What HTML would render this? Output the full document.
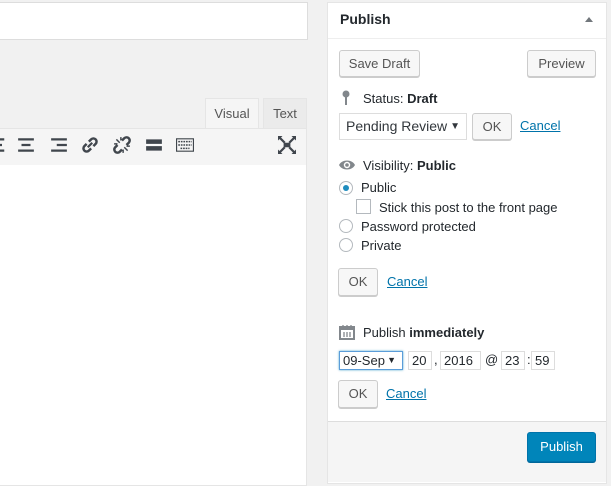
<!DOCTYPE html>
<html><head><style>
body{margin:0;width:611px;height:476px;background:#f1f1f1;font-family:"Liberation Sans",sans-serif;font-size:13px;color:#23282d;position:relative;overflow:hidden}
.a{position:absolute}
.btn{position:absolute;background:#f7f7f7;border:1px solid #ccc;border-radius:3px;box-shadow:0 1px 0 #ccc;color:#555;font-size:13px;text-align:center;box-sizing:border-box}
.lnk{position:absolute;color:#0073aa;text-decoration:underline}
.radio{position:absolute;width:14px;height:14px;border:1px solid #b4b9be;border-radius:50%;background:#fff;box-sizing:border-box}
.inp{position:absolute;border:1px solid #ddd;background:#fff;box-sizing:border-box;height:19px;font-size:13px;padding:0 3px;line-height:17px}
.tb{position:absolute;top:136px;width:18px;height:18px;fill:#40464d}
</style></head><body>
<div class="a" style="left:-2px;top:2px;width:308px;height:36px;background:#fff;border:1px solid #ddd"></div>
<div class="a" style="left:205px;top:98px;width:52px;height:31px;background:#f5f5f5;border:1px solid #e5e5e5;border-bottom:none;text-align:center;line-height:29px;color:#555">Visual</div>
<div class="a" style="left:263px;top:98px;width:42px;height:29px;background:#ebebeb;border:1px solid #e5e5e5;border-bottom:none;text-align:center;line-height:29px;color:#555">Text</div>
<div class="a" style="left:-2px;top:128px;width:307px;height:36px;background:#f5f5f5;border:1px solid #e5e5e5"></div>
<div class="a" style="left:-2px;top:165px;width:307px;height:320px;background:#fff;border:1px solid #e5e5e5;border-top:none"></div>
<svg class="tb" style="left:-7px" viewBox="0 0 16 16"><rect x="0" y="2" width="10" height="2"/><rect x="0" y="7" width="8" height="2"/><rect x="0" y="12" width="10" height="2"/></svg>
<svg class="tb" style="left:17px" viewBox="0 0 16 16"><rect x="1" y="2" width="14" height="2"/><rect x="4" y="7" width="8" height="2"/><rect x="1" y="12" width="14" height="2"/></svg>
<svg class="tb" style="left:50px" viewBox="0 0 16 16"><rect x="1" y="2" width="14" height="2"/><rect x="6" y="7" width="9" height="2"/><rect x="1" y="12" width="14" height="2"/></svg>
<svg class="tb" style="left:81px" viewBox="0 0 16 16"><path d="M6 10l4-4" stroke="#40464d" stroke-width="2" fill="none"/><path d="M7 5l2-2a2.8 2.8 0 014 4l-2 2M9 11l-2 2a2.8 2.8 0 01-4-4l2-2" stroke="#40464d" stroke-width="2.2" fill="none"/></svg>
<svg class="tb" style="left:113px" viewBox="0 0 16 16"><path d="M8 4l2-2a2.8 2.8 0 014 4l-2 2M8 12l-2 2a2.8 2.8 0 01-4-4l2-2" stroke="#40464d" stroke-width="2.2" fill="none"/><path d="M3 3l3 3M10 10l3 3M1 7h3M12 9h3M7 1v3M9 12v3" stroke="#40464d" stroke-width="1.3"/></svg>
<svg class="tb" style="left:145px" viewBox="0 0 16 16"><rect x="1" y="3" width="14" height="4"/><rect x="1" y="9" width="14" height="4"/><rect x="0" y="7.5" width="16" height="1" fill="#fff"/></svg>
<svg class="tb" style="left:176px" viewBox="0 0 16 16"><rect x="0.5" y="2.5" width="15" height="11" fill="none" stroke="#40464d"/><path d="M2 5h12M2 8h12M4 11h8" stroke="#40464d" stroke-width="1.4" stroke-dasharray="1.5 .8"/></svg>
<svg class="tb" style="left:278px" viewBox="0 0 16 16"><rect x="5" y="6" width="6" height="4"/><path d="M1 1l5 5M15 1l-5 5M1 15l5-5M15 15l-5-5" stroke="#40464d" stroke-width="2"/><path d="M0 0h4l-4 4zM16 0h-4l4 4zM0 16h4l-4-4zM16 16h-4l4-4z"/></svg>

<div class="a" style="left:327px;top:2px;width:278px;height:480px;background:#fff;border:1px solid #e5e5e5"></div>
<div class="a" style="left:328px;top:38px;width:278px;height:1px;background:#eee"></div>
<div class="a" style="left:340px;top:11px;font-weight:bold;font-size:14px">Publish</div>
<div class="a" style="left:585px;top:17px;width:0;height:0;border-left:4px solid transparent;border-right:4px solid transparent;border-bottom:5px solid #72777c"></div>
<div class="btn" style="left:339px;top:50px;width:81px;height:27px;line-height:25px">Save Draft</div>
<div class="btn" style="left:527px;top:50px;width:69px;height:27px;line-height:25px">Preview</div>
<svg class="a" style="left:342px;top:90px" width="8" height="16" viewBox="0 0 8 16"><circle cx="4" cy="4" r="3.5" fill="#82878c"/><rect x="3" y="6" width="2" height="9" fill="#82878c"/></svg>
<div class="a" style="left:363px;top:91px">Status: <b>Draft</b></div>
<div class="a" style="left:339px;top:113px;width:128px;height:27px;border:1px solid #ddd;box-sizing:border-box;font-size:14px;line-height:25px;padding-left:6px;color:#32373c">Pending Review<span style="position:absolute;right:6px;font-size:10px">▼</span></div>
<div class="btn" style="left:472px;top:113px;width:40px;height:27px;line-height:25px">OK</div>
<div class="lnk" style="left:520px;top:118px">Cancel</div>
<svg class="a" style="left:338px;top:159px" width="18" height="12" viewBox="0 0 18 12"><path d="M1 6c3-6 13-6 16 0c-3 6-13 6-16 0z" fill="#82878c"/><circle cx="9" cy="6" r="3.2" fill="#fff"/><circle cx="9" cy="6" r="1.8" fill="#82878c"/></svg>
<div class="a" style="left:363px;top:158px">Visibility: <b>Public</b></div>
<div class="radio" style="left:339px;top:181px"><div style="position:absolute;left:3px;top:3px;width:6px;height:6px;border-radius:50%;background:#1e8cbe"></div></div>
<div class="a" style="left:361px;top:180px">Public</div>
<div class="a" style="left:356px;top:199px;width:15px;height:15px;border:1px solid #b4b9be;box-sizing:border-box"></div>
<div class="a" style="left:379px;top:200px">Stick this post to the front page</div>
<div class="radio" style="left:339px;top:219px"></div>
<div class="a" style="left:361px;top:219px">Password protected</div>
<div class="radio" style="left:339px;top:238px"></div>
<div class="a" style="left:361px;top:238px">Private</div>
<div class="btn" style="left:338px;top:268px;width:40px;height:28px;line-height:26px">OK</div>
<div class="lnk" style="left:387px;top:274px">Cancel</div>
<svg class="a" style="left:339px;top:324px" width="16" height="16" viewBox="0 0 16 16"><rect x="1" y="3" width="14" height="12" fill="none" stroke="#82878c" stroke-width="2"/><rect x="1" y="3" width="14" height="3" fill="#82878c"/><path d="M4 1v4M8 1v4M12 1v4M5 8v5M8 8v5M11 8v5" stroke="#82878c" stroke-width="1.3"/></svg>
<div class="a" style="left:363px;top:325px">Publish <b>immediately</b></div>
<div class="a" style="left:339px;top:351px;width:64px;height:19px;border:1px solid #5b9dd9;box-shadow:0 0 2px rgba(30,140,190,.8);box-sizing:border-box;line-height:17px;padding-left:3px">09-Sep<span style="position:absolute;right:6px;font-size:9px">▼</span></div>
<div class="inp" style="left:408px;top:351px;width:24px">20</div>
<div class="a" style="left:434px;top:352px">,</div>
<div class="inp" style="left:440px;top:351px;width:41px">2016</div>
<div class="a" style="left:485px;top:352px">@</div>
<div class="inp" style="left:501px;top:351px;width:24px">23</div>
<div class="a" style="left:527px;top:352px">:</div>
<div class="inp" style="left:531px;top:351px;width:24px">59</div>
<div class="btn" style="left:338px;top:380px;width:40px;height:28px;line-height:26px">OK</div>
<div class="lnk" style="left:386px;top:386px">Cancel</div>
<div class="a" style="left:328px;top:421px;width:278px;height:60px;background:#f5f5f5;border-top:1px solid #ddd"></div>
<div class="a" style="left:527px;top:432px;width:69px;height:30px;background:#0085ba;border:1px solid #0073aa;border-radius:3px;box-shadow:0 1px 0 #006799;color:#fff;text-align:center;line-height:28px;box-sizing:border-box">Publish</div>
</body></html>
